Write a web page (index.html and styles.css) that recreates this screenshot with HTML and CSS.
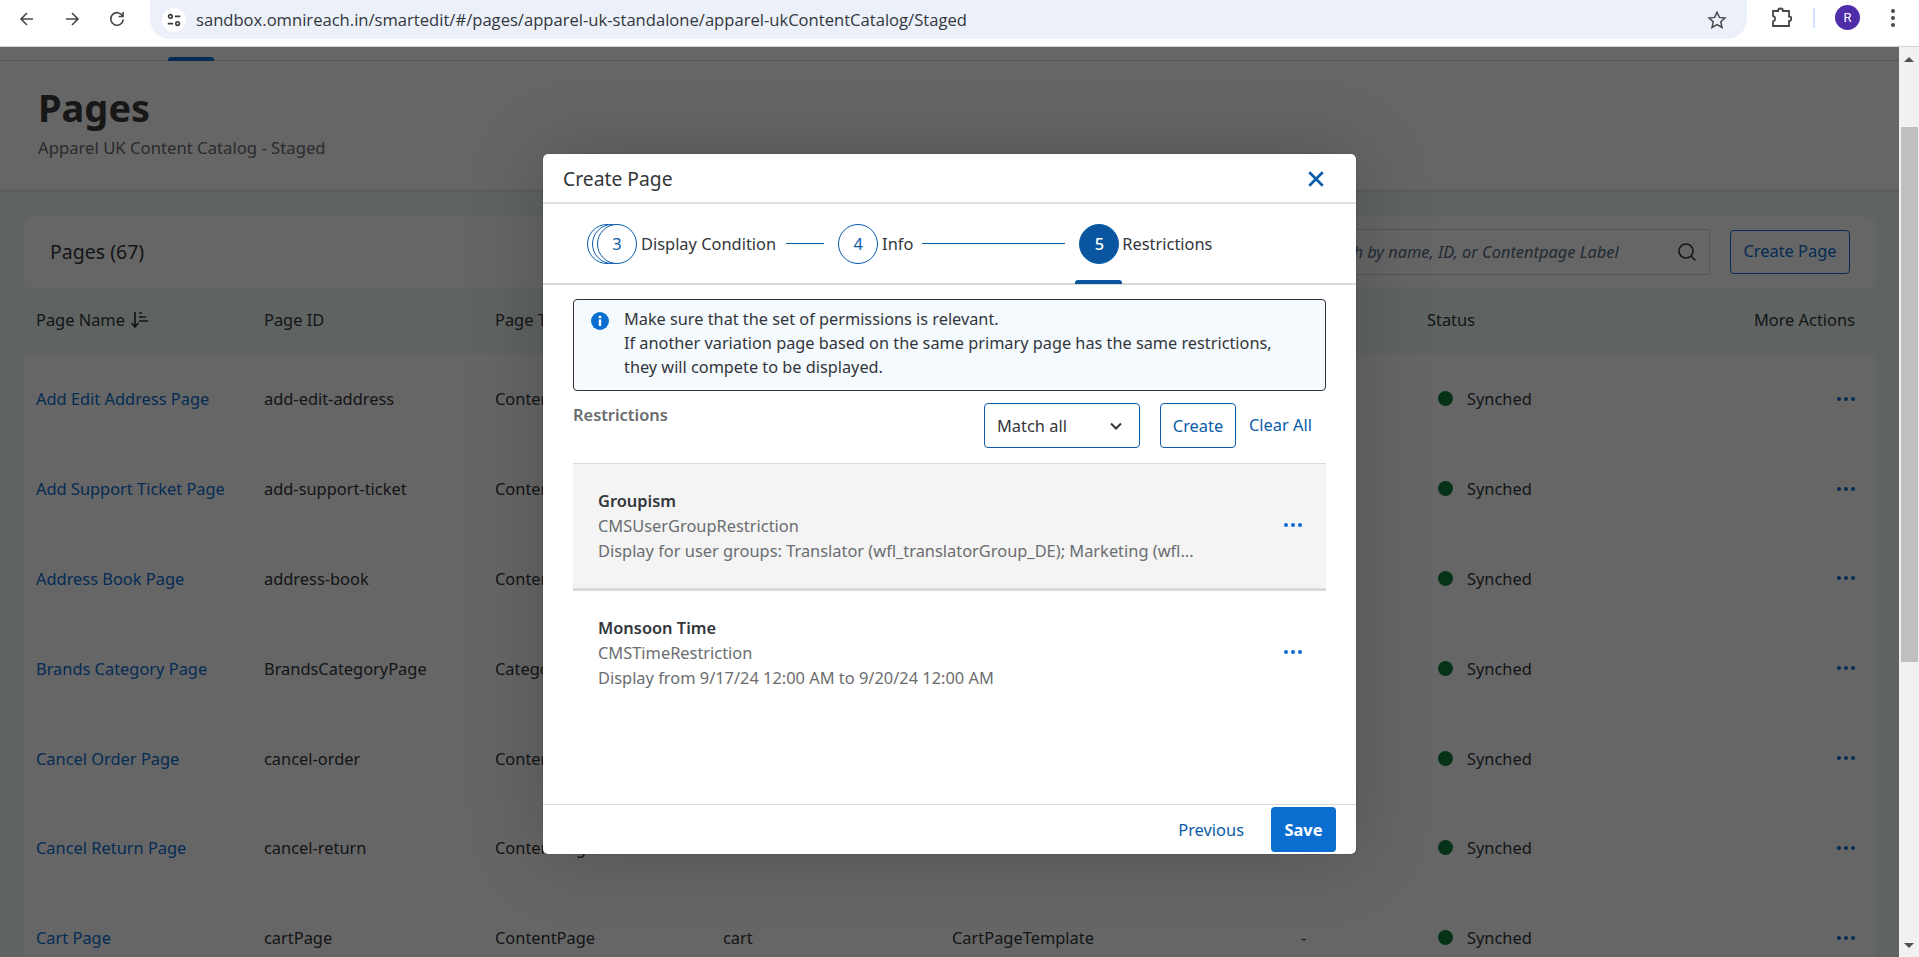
FILE: index.html
```html
<!DOCTYPE html>
<html lang="en">
<head>
    <meta charset="UTF-8">
    <title>Pages</title>
    <link rel="stylesheet" href="styles.css">
</head>
<body>
    <div class="chrome">
        <svg class="nav-icon" viewBox="0 0 20 20"><path d="M16 10H4.5M10 4l-6 6 6 6"/></svg>
        <svg class="nav-icon" viewBox="0 0 20 20"><path d="M4 10h11.5M10 4l6 6-6 6"/></svg>
        <svg class="nav-icon" viewBox="0 0 20 20"><path d="M15.6 7A6.3 6.3 0 1 0 16.3 10.5M16 3v4.5h-4.5"/></svg>
        <div class="url-bar">
            <span class="site-badge">
                <svg viewBox="0 0 20 20" width="18" height="18"><circle cx="6" cy="6" r="2"/><path d="M11 6h6M3 14h6"/><circle cx="14" cy="14" r="2"/></svg>
            </span>
            <span class="url-text">sandbox.omnireach.in/smartedit/#/pages/apparel-uk-standalone/apparel-ukContentCatalog/Staged</span>
            <svg class="star" viewBox="0 0 20 20" width="20" height="20"><path d="M10 2.2l2.4 5.2 5.6.6-4.2 3.8 1.2 5.6-5-2.9-5 2.9 1.2-5.6L2 8l5.6-.6z"/></svg>
        </div>
        <svg class="puzzle" viewBox="0 0 24 24" width="24" height="24"><path d="M4 5h5a2.500 2.500 0 0 1 5 0h6v5.500a2.200 2.200 0 0 1 0 4.500V20H4v-4.500a2.500 2.500 0 0 0 2-2.500 2.500 2.500 0 0 0-2-3z"/></svg>
        <span class="chrome-sep"></span>
        <span class="avatar">R</span>
        <span class="menu-dots"><i></i><i></i><i></i></span>
    </div>

    <div class="window">
        <div class="stage">
            <div class="tab-strip"><span class="tab-active"></span></div>
            <div class="page-head">
                <h1>Pages</h1>
                <p>Apparel UK Content Catalog - Staged</p>
            </div>
            <div class="page-body">
                <div class="toolbar">
                    <span class="toolbar-title">Pages (67)</span>
                    <div class="search">
                        <span class="search-text">Search by name, ID, or Contentpage Label</span>
                        <svg viewBox="0 0 20 20" width="20" height="20"><circle cx="9" cy="9" r="7"/><path d="M14 14l4.500 4.500"/></svg>
                    </div>
                    <span class="btn-outline">Create Page</span>
                </div>
                <div class="grid grid-head">
                    <span class="sort-head">Page Name
                        <svg viewBox="0 0 20 20" width="20" height="20"><path d="M5 2v15M1.500 13L5 17l3.500-4M9 3h3M9 7h7M9 11h9"/></svg>
                    </span>
                    <span>Page ID</span>
                    <span class="clip-cell">Page Type</span>
                    <span></span>
                    <span></span>
                    <span></span>
                    <span>Status</span>
                    <span class="right">More Actions</span>
                </div>
                <div class="grid grid-row">
                    <a>Add Edit Address Page</a><span>add-edit-address</span><span class="clip-cell">ContentPage</span><span></span><span></span><span></span>
                    <span class="status"><i></i>Synched</span><span class="right more"><i></i><i></i><i></i></span>
                </div>
                <div class="grid grid-row">
                    <a>Add Support Ticket Page</a><span>add-support-ticket</span><span class="clip-cell">ContentPage</span><span></span><span></span><span></span>
                    <span class="status"><i></i>Synched</span><span class="right more"><i></i><i></i><i></i></span>
                </div>
                <div class="grid grid-row">
                    <a>Address Book Page</a><span>address-book</span><span class="clip-cell">ContentPage</span><span></span><span></span><span></span>
                    <span class="status"><i></i>Synched</span><span class="right more"><i></i><i></i><i></i></span>
                </div>
                <div class="grid grid-row">
                    <a>Brands Category Page</a><span>BrandsCategoryPage</span><span class="clip-cell">CategoryPage</span><span></span><span></span><span></span>
                    <span class="status"><i></i>Synched</span><span class="right more"><i></i><i></i><i></i></span>
                </div>
                <div class="grid grid-row">
                    <a>Cancel Order Page</a><span>cancel-order</span><span class="clip-cell">ContentPage</span><span></span><span></span><span></span>
                    <span class="status"><i></i>Synched</span><span class="right more"><i></i><i></i><i></i></span>
                </div>
                <div class="grid grid-row">
                    <a>Cancel Return Page</a><span>cancel-return</span><span class="clip-cell">ContentPage</span><span></span><span></span><span></span>
                    <span class="status"><i></i>Synched</span><span class="right more"><i></i><i></i><i></i></span>
                </div>
                <div class="grid grid-row">
                    <a>Cart Page</a><span>cartPage</span><span>ContentPage</span><span>cart</span><span>CartPageTemplate</span><span>-</span>
                    <span class="status"><i></i>Synched</span><span class="right more"><i></i><i></i><i></i></span>
                </div>
            </div>

            <div class="overlay">
                <div class="modal">
                    <div class="modal-title">
                        <span>Create Page</span>
                        <svg viewBox="0 0 16 16" width="18" height="18"><path d="M2 2l12 12M14 2L2 14"/></svg>
                    </div>
                    <div class="stepper">
                        <span class="stack"><b class="circle"></b><b class="circle"></b><b class="circle">3</b></span>
                        <span class="step-label">Display Condition</span>
                        <span class="line line-short"></span>
                        <b class="circle">4</b>
                        <span class="step-label">Info</span>
                        <span class="line line-long"></span>
                        <span class="step-active"><b class="circle circle-on">5</b></span>
                        <span class="step-label step-label-last">Restrictions</span>
                    </div>
                    <div class="modal-body">
                        <div class="info-box">
                            <svg viewBox="0 0 18 18" width="18" height="18"><circle cx="9" cy="9" r="9" fill="#0a6ed1"/><rect x="7.800" y="7.500" width="2.400" height="6.500" fill="#fff"/><rect x="7.800" y="3.800" width="2.400" height="2.400" fill="#fff"/></svg>
                            <p>Make sure that the set of permissions is relevant.<br>If another variation page based on the same primary page has the same restrictions,<br>they will compete to be displayed.</p>
                        </div>
                        <div class="restrict-head">
                            <span class="restrict-label">Restrictions</span>
                            <span class="select">Match all
                                <svg viewBox="0 0 12 8" width="12" height="8"><path d="M1 1.500l5 5 5-5"/></svg>
                            </span>
                            <span class="btn-small">Create</span>
                            <a class="clear">Clear All</a>
                        </div>
                        <div class="restrict-item item-hover">
                            <div class="item-text">
                                <strong>Groupism</strong>
                                <span>CMSUserGroupRestriction</span>
                                <span>Display for user groups: Translator (wfl_translatorGroup_DE); Marketing (wfl...</span>
                            </div>
                            <span class="item-more"><i></i><i></i><i></i></span>
                        </div>
                        <div class="restrict-item item-plain">
                            <div class="item-text">
                                <strong>Monsoon Time</strong>
                                <span>CMSTimeRestriction</span>
                                <span>Display from 9/17/24 12:00 AM to 9/20/24 12:00 AM</span>
                            </div>
                            <span class="item-more"><i></i><i></i><i></i></span>
                        </div>
                    </div>
                    <div class="modal-foot">
                        <a class="prev">Previous</a>
                        <span class="btn-save">Save</span>
                    </div>
                </div>
            </div>
        </div>
        <div class="scrollbar">
            <span class="arrow-up"></span>
            <span class="thumb"></span>
            <span class="arrow-down"></span>
        </div>
    </div>
</body>
</html>
```
FILE: styles.css
```css
* {
    box-sizing: border-box;
    margin: 0;
    padding: 0;
}
body {
    height: 100vh;
    overflow: hidden;
    background: #fff;
    color: #32363a;
    font-family: "Noto Sans", "Open Sans", sans-serif;
    font-size: 16.4px;
}

/* browser bar */
.chrome {
    height: 47px;
    display: flex;
    align-items: flex-start;
    border-bottom: 1px solid #d4d4d4;
    background: #fff;
    padding-left: 17px;
}
.nav-icon {
    width: 20px;
    height: 20px;
    margin: 9px 25px 0 0;
    fill: none;
    stroke: #474747;
    stroke-width: 1.6;
}
.url-bar {
    width: 1597px;
    height: 39px;
    margin-left: -2px;
    background: #ebf0f9;
    border-radius: 0 0 20px 20px;
    display: flex;
    align-items: center;
    padding: 0 20px 0 12px;
}
.site-badge {
    width: 24px;
    height: 24px;
    border-radius: 50%;
    background: #fff;
    display: flex;
    align-items: center;
    justify-content: center;
}
.site-badge svg {
    fill: none;
    stroke: #3c3c3c;
    stroke-width: 1.8;
}
.url-text {
    margin-left: 10px;
    flex: 1;
    font-family: "Open Sans", sans-serif;
    font-size: 16.600px;
    color: #33373c;
}
.star {
    fill: none;
    stroke: #474747;
    stroke-width: 1.5;
}
.puzzle {
    margin: 6px 0 0 22px;
    fill: none;
    stroke: #474747;
    stroke-width: 1.8;
}
.chrome-sep {
    width: 2px;
    height: 20px;
    margin: 8px 0 0 20px;
    background: #d3e3fd;
}
.avatar {
    width: 25px;
    height: 25px;
    margin: 5px 0 0 20px;
    border-radius: 50%;
    background: #4f2ca8;
    color: #fff;
    font-family: "Roboto", sans-serif;
    font-size: 13px;
    line-height: 25px;
    text-align: center;
}
.menu-dots {
    width: 4px;
    margin: 9px 0 0 31px;
    display: flex;
    flex-direction: column;
    gap: 3px;
}
.menu-dots i {
    width: 4px;
    height: 4px;
    border-radius: 50%;
    background: #474747;
}

.window {
    height: 910px;
    display: flex;
}
.stage {
    position: relative;
    width: 1899px;
    overflow: hidden;
    background: #eef7f5;
}

/* page under the dialog */
.tab-strip {
    height: 14px;
    background: #fff;
    border-bottom: 1px solid #d9d9d9;
    display: flex;
    padding-left: 168px;
}
.tab-active {
    width: 46px;
    height: 4px;
    margin-top: 10px;
    background: #0a6ed1;
    border-radius: 3px 3px 0 0;
}
.page-head {
    height: 129px;
    background: #fff;
    padding: 23px 38px 0;
    box-shadow: 0 1px 2px rgba(0, 0, 0, 0.15);
}
.page-head h1 {
    font-size: 38px;
    line-height: 46px;
    font-weight: 700;
    color: #3b3b3b;
}
.page-head p {
    margin-top: 7px;
    line-height: 22px;
    font-size: 16.700px;
    color: #6a6d70;
}
.page-body {
    padding: 27px 24px 0 25px;
}
.toolbar {
    height: 70px;
    background: #fff;
    border-radius: 8px 8px 0 0;
    display: flex;
    align-items: center;
    padding: 0 25px 0 25px;
    font-size: 19.500px;
}
.toolbar-title {
    flex: 1;
    padding-bottom: 2px;
}
.search {
    width: 409px;
    height: 46px;
    border: 1px solid #d0d5da;
    border-radius: 3px;
    display: flex;
    align-items: center;
    justify-content: space-between;
    padding: 0 12px;
    font-size: 16.400px;
    font-style: italic;
    color: #556b82;
}
.search-text {
    padding-bottom: 2px;
    white-space: nowrap;
}
.search svg {
    flex: none;
    fill: none;
    stroke: #32363a;
    stroke-width: 1.6;
}
.btn-outline {
    width: 120px;
    height: 44px;
    margin-left: 20px;
    border: 1px solid #0a6ed1;
    border-radius: 4px;
    color: #0a6ed1;
    font-size: 16.400px;
    line-height: 40px;
    text-align: center;
}
.grid {
    display: grid;
    grid-template-columns: 228px 231px 228px 229px 349px 126px 1fr 120px;
    align-items: center;
    padding: 0 20px 0 11px;
}
.grid-head {
    height: 67px;
    padding-bottom: 2px;
}
.sort-head {
    display: flex;
    align-items: center;
    gap: 5px;
}
.sort-head svg {
    fill: none;
    stroke: #32363a;
    stroke-width: 1.7;
}
.grid-row {
    height: 89.800px;
    background: #fff;
}
.grid-row a {
    color: #0a6ed1;
    white-space: nowrap;
}
.clip-cell {
    white-space: nowrap;
    overflow: hidden;
}
.right {
    text-align: right;
    white-space: nowrap;
}
.status {
    display: flex;
    align-items: center;
    gap: 14px;
    padding-left: 11px;
}
.status i {
    width: 15px;
    height: 15px;
    border-radius: 50%;
    background: #107e3e;
}
.more, .item-more {
    display: flex;
    justify-content: flex-end;
    gap: 3px;
}
.more i, .item-more i {
    width: 4px;
    height: 4px;
    border-radius: 50%;
    background: #0a6ed1;
}

/* dialog */
.overlay {
    position: absolute;
    inset: 0;
    background: rgba(0, 0, 0, 0.6);
    display: flex;
    align-items: center;
    justify-content: center;
    padding-top: 4px;
}
.modal {
    width: 813px;
    height: 700px;
    background: #fff;
    border-radius: 5px;
    display: flex;
    flex-direction: column;
    box-shadow: 0 0 1px #222, 0 0 80px rgba(0, 0, 0, 0.2);
}
.modal-title {
    height: 50px;
    flex: none;
    display: flex;
    align-items: center;
    justify-content: space-between;
    padding: 0 31px 0 20px;
    border-bottom: 2px solid #e0e0e0;
    font-size: 19.300px;
}
.modal-title svg {
    margin-top: 2px;
    fill: none;
    stroke: #0a5ca8;
    stroke-width: 2.400;
}
.stepper {
    height: 81px;
    flex: none;
    display: flex;
    align-items: center;
    padding: 0 0 0 44px;
    border-bottom: 2px solid #d9d9d9;
}
.circle {
    width: 40px;
    height: 40px;
    flex: none;
    border: 1px solid #0a5ca8;
    border-radius: 50%;
    background: #fff;
    color: #0a5ca8;
    font-weight: 400;
    line-height: 38px;
    text-align: center;
}
.circle-on {
    background: #0a55a0;
    color: #fff;
    font-weight: 500;
}
.stack {
    width: 50px;
    flex: none;
    display: flex;
}
.stack .circle + .circle {
    margin-left: -35px;
}
.step-label {
    margin-left: 4px;
}
.step-label-last {
    margin-left: 3px;
}
.line {
    height: 1px;
    flex: none;
    background: #0a5ca8;
}
.line-short {
    width: 38px;
    margin: 0 14px 0 10px;
}
.line-long {
    width: 143px;
    margin: 0 14px 0 9px;
}
.step-active {
    position: relative;
    display: flex;
    flex: none;
}
.step-active::after {
    content: "";
    position: absolute;
    left: -4px;
    bottom: -20px;
    width: 47px;
    height: 4px;
    background: #0a55a0;
    border-radius: 3px 3px 0 0;
}
.modal-body {
    flex: 1;
    padding: 14px 30px 0 30px;
}
.info-box {
    height: 92px;
    display: flex;
    gap: 15px;
    padding: 7px 0 0 17px;
    background: #f5faff;
    border: 1px solid #32363a;
    border-radius: 4px;
    font-size: 16.300px;
    line-height: 24px;
}
.info-box svg {
    flex: none;
    margin-top: 5px;
}
.restrict-head {
    height: 73px;
    padding-top: 12px;
    display: flex;
    align-items: flex-start;
    border-bottom: 1px solid #d9d9d9;
}
.restrict-label {
    flex: 1;
    font-weight: 600;
    color: #6a6d70;
}
.select {
    width: 156px;
    height: 45px;
    border: 1px solid #0a5ca8;
    border-radius: 4px;
    display: flex;
    align-items: center;
    justify-content: space-between;
    padding: 0 17px 0 12px;
}
.select svg {
    fill: none;
    stroke: #32363a;
    stroke-width: 2;
}
.btn-small {
    width: 76px;
    height: 45px;
    margin-left: 20px;
    border: 1px solid #0a5ca8;
    border-radius: 4px;
    color: #0a5ca8;
    line-height: 43px;
    text-align: center;
}
.clear {
    width: 77px;
    margin-left: 13px;
    margin-top: 10px;
    color: #0a5ca8;
    white-space: nowrap;
}
.restrict-item {
    height: 124px;
    display: flex;
    align-items: center;
    justify-content: space-between;
    padding: 0 24px 0 25px;
}
.item-hover {
    height: 127px;
    background: #f4f4f4;
    border-bottom: 3px solid #d9d9d9;
    padding-bottom: 2px;
}
.item-plain {
    padding-bottom: 2px;
}
.item-text {
    display: flex;
    flex-direction: column;
    line-height: 25px;
    color: #6a6d70;
}
.item-text strong {
    color: #32363a;
    font-weight: 600;
}
.modal-foot {
    height: 50px;
    flex: none;
    display: flex;
    align-items: center;
    justify-content: flex-end;
    padding-right: 20px;
    border-top: 1px solid #d9d9d9;
}
.prev {
    margin-right: 27px;
    color: #0a5ca8;
}
.btn-save {
    width: 65px;
    height: 45px;
    background: #0a6ed1;
    border-radius: 4px;
    color: #fff;
    font-weight: 700;
    line-height: 45px;
    text-align: center;
}

/* page scrollbar */
.scrollbar {
    width: 20px;
    background: #f1f1f1;
    display: flex;
    flex-direction: column;
    align-items: center;
    padding-top: 10px;
}
.arrow-up, .arrow-down {
    width: 0;
    height: 0;
    border-left: 5px solid transparent;
    border-right: 5px solid transparent;
}
.arrow-up {
    border-bottom: 5px solid #505050;
}
.arrow-down {
    margin-top: 281px;
    border-top: 5px solid #505050;
}
.thumb {
    width: 17px;
    height: 535px;
    margin-top: 65px;
    background: #bfbfbf;
}
```
